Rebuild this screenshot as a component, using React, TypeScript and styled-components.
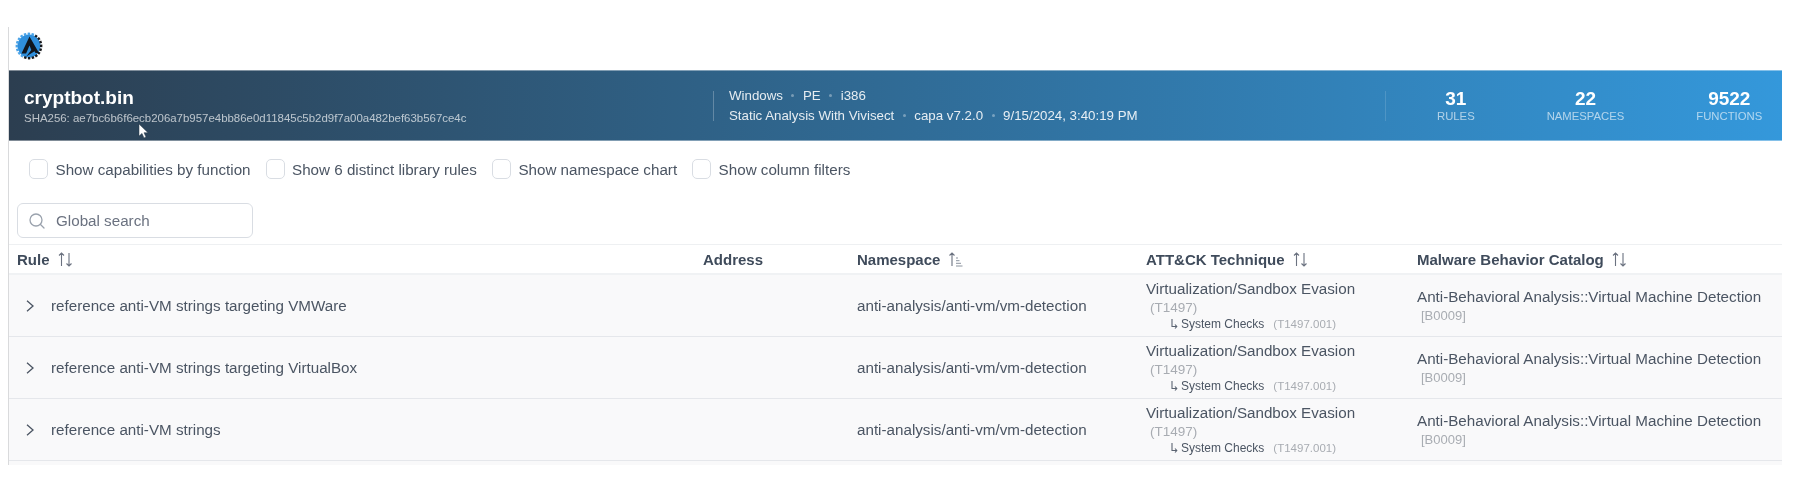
import React from "react";
import styled, { createGlobalStyle } from "styled-components";

const COLUMNS = "686px 154px 289px 271px 373px";

const GlobalStyle = createGlobalStyle`
  html, body {
    margin: 0;
    padding: 0;
    background: #ffffff;
    overflow: hidden;
  }
  body {
    font-family: "Liberation Sans", Arial, sans-serif;
    font-size: 15.2px;
    color: #4b5563;
  }
`;

const Page = styled.div`
  position: relative;
  box-sizing: border-box;
  width: 1774px;
  height: 438px;
  margin: 27px 0 0 8px;
  border-left: 1px solid #d9dadc;
  overflow: hidden;
  filter: blur(0.35px);
`;

const LogoBar = styled.div`
  display: flex;
  align-items: flex-end;
  height: 43px;
  padding: 0 0 10px 6px;
  box-sizing: border-box;
`;

const Banner = styled.header`
  display: flex;
  align-items: center;
  box-sizing: border-box;
  height: 71px;
  background: linear-gradient(to right, #2c3e50, #3498db);
  border-top: 1px solid rgba(255, 255, 255, 0.4);
  border-bottom: 1px solid rgba(255, 255, 255, 0.4);
  color: #ffffff;
`;

const FileInfo = styled.div`
  box-sizing: border-box;
  width: 704px;
  padding-left: 15px;
`;

const FileName = styled.div`
  font-size: 19px;
  font-weight: 700;
  line-height: 24px;
`;

const Sha = styled.div`
  font-size: 11.45px;
  line-height: 15px;
  color: rgba(255, 255, 255, 0.68);
  margin-top: 1px;
`;

const Meta = styled.div`
  box-sizing: border-box;
  width: 672px;
  height: 30px;
  padding-left: 15px;
  border-left: 1px solid rgba(255, 255, 255, 0.25);
  font-size: 13.3px;
  display: flex;
  flex-direction: column;
  justify-content: center;
  gap: 4px;
  color: rgba(255, 255, 255, 0.88);
`;

const MetaLine = styled.div`
  display: flex;
  align-items: center;
  line-height: 16px;
`;

const Dot = styled.span`
  width: 3px;
  height: 3px;
  margin: 0 8.5px;
  border-radius: 50%;
  background: rgba(255, 255, 255, 0.35);
`;

const Stats = styled.div`
  display: flex;
  height: 30px;
  align-items: center;
  gap: 72px;
  padding-left: 51px;
  border-left: 1px solid rgba(255, 255, 255, 0.14);
`;

const Stat = styled.div`
  display: flex;
  flex-direction: column;
  align-items: center;
`;

const StatValue = styled.div`
  font-size: 19px;
  font-weight: 700;
  line-height: 20px;
`;

const StatLabel = styled.div`
  font-size: 11.3px;
  line-height: 14px;
  color: rgba(255, 255, 255, 0.62);
`;

const Toggles = styled.div`
  display: flex;
  align-items: center;
  height: 20px;
  padding: 18px 0 0 20px;
`;

const Toggle = styled.label`
  display: flex;
  align-items: center;
  gap: 7.5px;
  margin-right: 15px;
  color: #4b5563;
`;

const Box = styled.span`
  box-sizing: border-box;
  width: 19px;
  height: 20px;
  border: 1.5px solid #d9dde3;
  border-radius: 5px;
  background: #ffffff;
`;

const SearchWrap = styled.div`
  display: flex;
  align-items: center;
  gap: 11px;
  box-sizing: border-box;
  width: 236px;
  height: 35px;
  margin: 24px 0 0 8px;
  padding-left: 11px;
  border: 1.5px solid #d9dde3;
  border-radius: 6px;
  color: #6b7280;
`;

const Table = styled.div`
  margin-top: 6px;
`;

const HeadRow = styled.div`
  display: grid;
  grid-template-columns: ${COLUMNS};
  box-sizing: border-box;
  height: 31px;
  border-top: 1px solid #eef0f2;
  border-bottom: 2px solid #f0f2f4;
`;

const HeadCell = styled.div`
  display: flex;
  align-items: center;
  gap: 8px;
  padding-left: 8px;
  font-size: 15px;
  font-weight: 700;
  color: #3f4b5b;
`;

const Row = styled.div`
  display: grid;
  grid-template-columns: ${COLUMNS};
  box-sizing: border-box;
  height: 62px;
  background: #f9f9fa;
  border-bottom: 1px solid #e5e7eb;
`;

const RuleCell = styled.div`
  display: flex;
  align-items: center;
  gap: 17px;
  padding-left: 17px;
`;

const Cell = styled.div`
  display: flex;
  align-items: center;
  padding-left: 8px;
`;

const StackCell = styled.div`
  display: flex;
  flex-direction: column;
  justify-content: center;
  padding-left: 8px;
`;

const CatalogCell = styled(StackCell)`
  padding-top: 2px;
`;

const Line = styled.div`
  line-height: 18px;
`;

const Muted = styled.div<{ $size: number }>`
  font-size: ${(p) => p.$size}px;
  line-height: ${(p) => (p.$size === 13 ? 20 : 19)}px;
  padding-left: 4px;
  color: #a8acb2;
`;

const SubLine = styled.div`
  display: flex;
  align-items: center;
  gap: 3px;
  padding-left: 25px;
  font-size: 12px;
  line-height: 14px;
`;

const SubId = styled.span`
  margin-left: 6px;
  font-size: 11.5px;
  color: #a8acb2;
`;

const Strip = styled.div`
  height: 5px;
  background: #f9f9fa;
`;

const Pointer = styled.svg`
  position: absolute;
  left: 129px;
  top: 96px;
`;

const Logo = () => (
  <svg width="28" height="28" viewBox="0 0 28 28">
    <circle cx="14" cy="14" r="11.5" fill="#2f8fdc" />
    <g transform="rotate(30 14 14)">
      <path d="M14 1.8a12.2 12.2 0 0 1 0 24.4" fill="none" stroke="#16191d" strokeWidth="2.4" strokeDasharray="2.4 1.4" />
      <path d="M14 26.2a12.2 12.2 0 0 1 0-24.4" fill="none" stroke="#4aa3e8" strokeWidth="2.4" strokeDasharray="2.4 1.4" />
    </g>
    <path d="M14.5 4.5 6.5 21.5h4.6l3.4-8 1.8 4.5-5 6.5 8.2-5.2 1 1.7h3.5L14.5 4.5z" fill="#10161d" />
  </svg>
);

const SearchIcon = () => (
  <svg width="16" height="16" viewBox="0 0 16 16" fill="none" stroke="#9aa2ad" strokeWidth="1.3" strokeLinecap="round">
    <circle cx="7" cy="7" r="6" />
    <path d="m11.5 11.5 3.5 3.5" />
  </svg>
);

const SortIcon = () => (
  <svg width="15" height="15" viewBox="0 0 15 15" fill="none" stroke="#6b7280" strokeWidth="1.1">
    <path d="M3.5 14V1M1 3.5 3.5 1 6 3.5" />
    <path d="M11 1v13M8.5 11.5 11 14l2.5-2.5" />
  </svg>
);

const SortAscIcon = () => (
  <svg width="15" height="15" viewBox="0 0 15 15" fill="none" stroke="#6b7280" strokeWidth="1.1">
    <path d="M4 14V1M1.5 3.5 4 1l2.5 2.5" />
    <path d="M8 6h2M8 8.7h3.5M8 11.3h5M8 14h6.5" strokeWidth="1" stroke="#8b939e" />
  </svg>
);

const Chevron = () => (
  <svg width="8" height="12" viewBox="0 0 8 12" fill="none" stroke="#4b5563" strokeWidth="1.3">
    <path d="m1 .7 6 5.3-6 5.3" />
  </svg>
);

const Hook = () => (
  <svg width="7" height="10" viewBox="0 0 7 10" fill="none" stroke="#5b6472" strokeWidth="1.1">
    <path d="M1 0v7.5h4.5M4 5.5l1.8 2-1.8 2" />
  </svg>
);

const rules = [
  "reference anti-VM strings targeting VMWare",
  "reference anti-VM strings targeting VirtualBox",
  "reference anti-VM strings",
];

const toggles = [
  "Show capabilities by function",
  "Show 6 distinct library rules",
  "Show namespace chart",
  "Show column filters",
];

export default function App() {
  return (
    <>
      <GlobalStyle />
      <Page>
        <LogoBar>
          <Logo />
        </LogoBar>
        <Banner>
          <FileInfo>
            <FileName>cryptbot.bin</FileName>
            <Sha>SHA256: ae7bc6b6f6ecb206a7b957e4bb86e0d11845c5b2d9f7a00a482bef63b567ce4c</Sha>
          </FileInfo>
          <Meta>
            <MetaLine>
              Windows<Dot />PE<Dot />i386
            </MetaLine>
            <MetaLine>
              Static Analysis With Vivisect<Dot />capa v7.2.0<Dot />9/15/2024, 3:40:19 PM
            </MetaLine>
          </Meta>
          <Stats>
            <Stat>
              <StatValue>31</StatValue>
              <StatLabel>RULES</StatLabel>
            </Stat>
            <Stat>
              <StatValue>22</StatValue>
              <StatLabel>NAMESPACES</StatLabel>
            </Stat>
            <Stat>
              <StatValue>9522</StatValue>
              <StatLabel>FUNCTIONS</StatLabel>
            </Stat>
          </Stats>
        </Banner>
        <Toggles>
          {toggles.map((label) => (
            <Toggle key={label}>
              <Box />
              {label}
            </Toggle>
          ))}
        </Toggles>
        <SearchWrap>
          <SearchIcon />
          Global search
        </SearchWrap>
        <Table>
          <HeadRow>
            <HeadCell>
              Rule <SortIcon />
            </HeadCell>
            <HeadCell>Address</HeadCell>
            <HeadCell>
              Namespace <SortAscIcon />
            </HeadCell>
            <HeadCell>
              ATT&amp;CK Technique <SortIcon />
            </HeadCell>
            <HeadCell>
              Malware Behavior Catalog <SortIcon />
            </HeadCell>
          </HeadRow>
          {rules.map((rule) => (
            <Row key={rule}>
              <RuleCell>
                <Chevron />
                {rule}
              </RuleCell>
              <Cell />
              <Cell>anti-analysis/anti-vm/vm-detection</Cell>
              <StackCell>
                <Line>Virtualization/Sandbox Evasion</Line>
                <Muted $size={13.5}>(T1497)</Muted>
                <SubLine>
                  <Hook />
                  System Checks
                  <SubId>(T1497.001)</SubId>
                </SubLine>
              </StackCell>
              <CatalogCell>
                <Line>Anti-Behavioral Analysis::Virtual Machine Detection</Line>
                <Muted $size={13}>[B0009]</Muted>
              </CatalogCell>
            </Row>
          ))}
          <Strip />
        </Table>
        <Pointer width="12" height="16" viewBox="0 0 12 16">
          <path d="M1 1v12l3-2.6 2 4.6 2-.9-2-4.4h4L1 1z" fill="#ffffff" stroke="#2b3a4a" strokeWidth="0.5" />
        </Pointer>
      </Page>
    </>
  );
}
